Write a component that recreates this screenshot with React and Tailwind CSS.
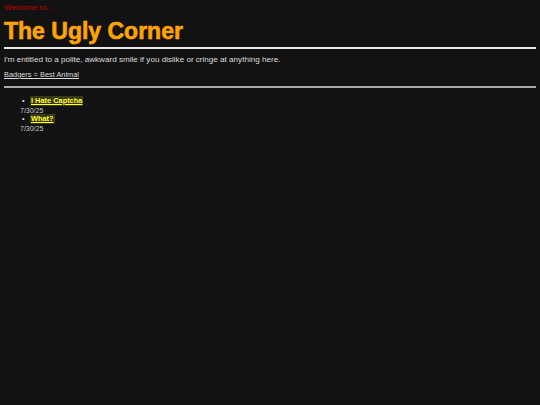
export default function App() {
  const posts = [
    {title: 'I Hate Captcha', date: '7/30/25'},
    {title: 'What?', date: '7/30/25'},
  ]
  return (
    <div className="min-h-[405px] bg-[#121212] px-[4px] pt-[3px] font-['Liberation_Sans',Arial,sans-serif]">
      <p className="text-[8px] leading-[10px] text-[#c40000]">Welcome to...</p>
      <h1 className="mt-[5px] text-[23px] leading-[26px] font-bold text-[#ffa500] [-webkit-text-stroke:0.6px_#ffa500]">
        The Ugly Corner
      </h1>
      <hr className="mt-[3px] border-0 h-[2px] bg-[#e8e8e8]" />
      <p className="mt-[6px] text-[8.1px] leading-[10px] text-[#dddddd]">
        I'm entitled to a polite, awkward smile if you dislike or cringe at anything here.
      </p>
      <p className="mt-[5px] text-[7.4px] leading-[9px] text-[#dddddd] underline">Badgers = Best Animal</p>
      <hr className="mt-[7px] border-0 h-[2px] bg-[#aaaaaa]" />
      <ul className="mt-[8px] pl-[16px]">
        {posts.map((p) => (
          <li key={p.title} className="text-[7.4px] leading-[10px] mb-[-2px]">
            <div className="flex items-center">
              <span className="w-[10px] text-[#dddddd] pl-[2px]">•</span>
              <span className="bg-[#3a3a10] text-[#ffff33] font-bold underline px-[1px]">{p.title}</span>
            </div>
            <div className="text-[7px] leading-[10px] text-[#c8c8c8]">{p.date}</div>
          </li>
        ))}
      </ul>
    </div>
  )
}
